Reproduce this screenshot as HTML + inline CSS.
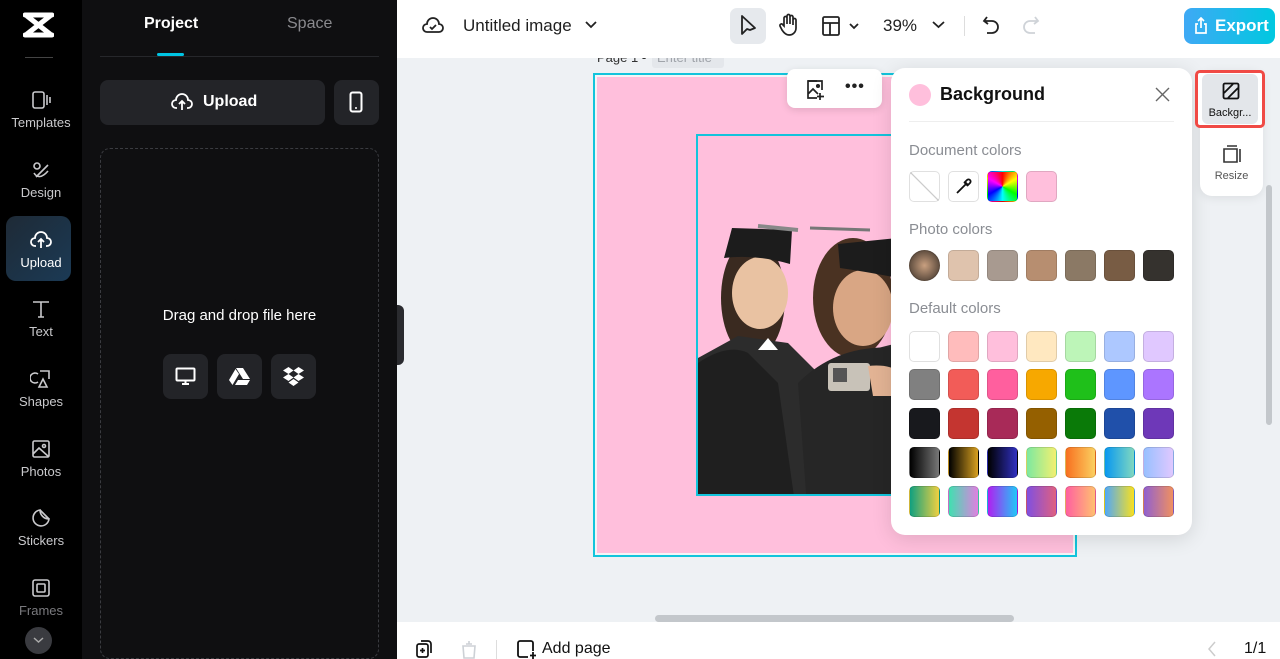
<!DOCTYPE html>
<html><head><meta charset="utf-8"><style>
*{box-sizing:border-box;margin:0;padding:0}
body{width:1280px;height:659px;overflow:hidden;font-family:"Liberation Sans",sans-serif;background:#eef1f4;position:relative}
.abs{position:absolute}
.rail{left:0;top:0;width:82px;height:659px;background:#000}
.ri{position:absolute;left:0;width:82px;text-align:center;color:#c9c9cc;font-size:13px}
.ri svg{display:block;margin:0 auto 4px}
.panel{left:82px;top:0;width:315px;height:659px;background:#0f0f11}
.top{left:397px;top:0;width:883px;height:58px;background:#fff;z-index:2}
.bot{left:397px;top:622px;width:883px;height:37px;background:#fff}
.sw{position:absolute;width:31px;height:31px;border-radius:5px;border:1px solid rgba(0,0,0,.12)}
.lbl{position:absolute;left:909px;color:#8a8d93;font-size:15px}
.z{z-index:3}
</style></head><body>
<div class="abs rail"></div>
<svg class="abs" style="left:23px;top:12px" width="31" height="26" viewBox="0 0 31 26"><path d="M2 3h27M2 23h27M4 4l23 18M27 4L4 22" stroke="#fff" stroke-width="5" fill="none" stroke-linecap="round"/></svg>
<div class="abs" style="left:25px;top:57px;width:28px;height:1px;background:#444"></div>
<div class="ri" style="top:89px"><svg width="22" height="22" viewBox="0 0 22 22" fill="none" stroke="#c9c9cc" stroke-width="1.6"><rect x="3" y="3" width="11" height="16" rx="2"/><path d="M17 6v10M20 8v6"/></svg>Templates</div>
<div class="ri" style="top:159px"><svg width="22" height="22" viewBox="0 0 22 22" fill="none" stroke="#c9c9cc" stroke-width="1.6"><circle cx="7" cy="7" r="3"/><path d="M6 18l12-12M4 14c3 5 8 5 14-2"/></svg>Design</div>
<div class="abs" style="left:6px;top:216px;width:65px;height:65px;border-radius:10px;background:linear-gradient(135deg,#1e2a36,#1b3a55)"></div>
<div class="ri" style="top:229px;color:#fff"><svg width="22" height="22" viewBox="0 0 22 22" fill="none" stroke="#fff" stroke-width="1.8"><path d="M6 17H5a4 4 0 0 1 0-8 6 6 0 0 1 12 0 4 4 0 0 1 0 8h-1M11 19v-8M8 13l3-3 3 3"/></svg>Upload</div>
<div class="ri" style="top:298px"><svg width="22" height="22" viewBox="0 0 22 22" fill="none" stroke="#c9c9cc" stroke-width="1.6"><path d="M3 4h16M11 4v15M8 19h6"/></svg>Text</div>
<div class="ri" style="top:368px"><svg width="22" height="22" viewBox="0 0 22 22" fill="none" stroke="#c9c9cc" stroke-width="1.6"><path d="M8 6a5 5 0 1 0 0 8M10 3h9v8M9 19l4-8 4 8z"/></svg>Shapes</div>
<div class="ri" style="top:438px"><svg width="22" height="22" viewBox="0 0 22 22" fill="none" stroke="#c9c9cc" stroke-width="1.6"><rect x="3" y="3" width="16" height="16" rx="1.5"/><circle cx="14" cy="8" r="1.5"/><path d="M3 16l6-6 10 9"/></svg>Photos</div>
<div class="ri" style="top:507px"><svg width="22" height="22" viewBox="0 0 22 22" fill="none" stroke="#c9c9cc" stroke-width="1.6"><path d="M19 12A8 8 0 1 1 10 3c0 5 4 9 9 9zM10 3l9 9"/></svg>Stickers</div>
<div class="ri" style="top:577px;color:#7a7a7e"><svg width="22" height="22" viewBox="0 0 22 22" fill="none" stroke="#c9c9cc" stroke-width="1.6"><rect x="3" y="3" width="16" height="16" rx="2"/><rect x="7" y="7" width="8" height="8" rx="1"/></svg>Frames</div>
<div class="abs" style="left:25px;top:627px;width:27px;height:27px;border-radius:50%;background:#3a3b40"></div>
<svg class="abs" style="left:33px;top:636px" width="11" height="8"><path d="M1 2l4.5 4 4.5-4" stroke="#aaa" fill="none" stroke-width="1.5"/></svg>

<div class="abs panel"></div>
<div class="abs" style="left:144px;top:15px;color:#fff;font-weight:bold;font-size:16px">Project</div>
<div class="abs" style="left:287px;top:15px;color:#8a8a8e;font-size:16px">Space</div>
<div class="abs" style="left:100px;top:56px;width:279px;height:1px;background:#26272b"></div>
<div class="abs" style="left:157px;top:53px;width:27px;height:3px;border-radius:2px;background:#00c4e3"></div>
<div class="abs" style="left:100px;top:80px;width:225px;height:45px;border-radius:8px;background:#232428"></div>
<svg class="abs" style="left:171px;top:92px" width="22" height="20" viewBox="0 0 22 20" fill="none" stroke="#fff" stroke-width="1.8"><path d="M6 16H5a4 4 0 0 1 0-8 6 6 0 0 1 12 0 4 4 0 0 1 0 8h-1M11 18v-8M8 12l3-3 3 3"/></svg>
<div class="abs" style="left:203px;top:93px;color:#fff;font-weight:bold;font-size:16px">Upload</div>
<div class="abs" style="left:334px;top:80px;width:45px;height:45px;border-radius:8px;background:#232428"></div>
<svg class="abs" style="left:349px;top:91px" width="14" height="22"><rect x="1.5" y="1.5" width="11" height="19" rx="2" stroke="#fff" stroke-width="2" fill="none"/><circle cx="7" cy="17" r="1" fill="#fff"/></svg>
<div class="abs" style="left:100px;top:148px;width:279px;height:511px;border:1px dashed #3a3b40;border-radius:10px"></div>
<div class="abs" style="left:100px;top:307px;width:279px;text-align:center;color:#fff;font-size:15px">Drag and drop file here</div>
<div class="abs" style="left:163px;top:354px;width:45px;height:45px;border-radius:8px;background:#232428"></div>
<div class="abs" style="left:217px;top:354px;width:45px;height:45px;border-radius:8px;background:#232428"></div>
<div class="abs" style="left:271px;top:354px;width:45px;height:45px;border-radius:8px;background:#232428"></div>
<svg class="abs" style="left:175px;top:367px" width="21" height="19"><rect x="1.5" y="1.5" width="18" height="12" rx="1" stroke="#fff" stroke-width="2" fill="none"/><path d="M7 17h7M10.5 14v3" stroke="#fff" stroke-width="2"/></svg>
<svg class="abs" style="left:229px;top:367px" width="21" height="18" viewBox="0 0 21 18"><path d="M7 1h7l7 11h-7z" fill="#fff"/><path d="M6.5 2L0 13l3.5 5 6.5-11z" fill="#fff"/><path d="M6 18l3-5h12l-3 5z" fill="#fff"/></svg>
<svg class="abs" style="left:283px;top:366px" width="21" height="20" viewBox="0 0 21 20" fill="#fff"><path d="M5.5 1L0 4.5 5.5 8 10.5 4.5zM15.5 1L10.5 4.5 15.5 8 21 4.5zM0 11.5L5.5 15 10.5 11.5 5.5 8zM21 11.5L15.5 8 10.5 11.5 15.5 15zM5.5 16.5L10.5 20 15.5 16.5 10.5 13z"/></svg>
<div class="abs" style="left:397px;top:305px;width:7px;height:60px;background:#2a2b2f;border-radius:0 6px 6px 0"></div>

<div class="abs top"></div>
<svg class="abs z" style="left:422px;top:15px" width="22" height="20" viewBox="0 0 22 20" fill="none" stroke="#222" stroke-width="1.8"><path d="M6 17H5a4 4 0 0 1 0-8 6 6 0 0 1 12 0 4 4 0 0 1 0 8H6M8 12l2 2 4-4"/></svg>
<div class="abs z" style="left:463px;top:16px;font-size:17px;color:#1f1f1f">Untitled image</div>
<svg class="abs z" style="left:585px;top:21px" width="12" height="8"><path d="M1 1l5 5 5-5" stroke="#222" stroke-width="1.8" fill="none"/></svg>
<div class="abs z" style="left:730px;top:8px;width:36px;height:36px;border-radius:7px;background:#e6e9ed"></div>
<svg class="abs z" style="left:739px;top:14px" width="18" height="24"><path d="M3 2v18l5-5 3 1 5 -2z" stroke="#222" stroke-width="1.8" fill="none" stroke-linejoin="round"/></svg>
<svg class="abs z" style="left:778px;top:13px" width="20" height="24" viewBox="0 0 20 24" fill="none" stroke="#222" stroke-width="1.7"><path d="M6 13V5a1.5 1.5 0 0 1 3 0v6V3a1.5 1.5 0 0 1 3 0v8V4a1.5 1.5 0 0 1 3 0v8V7a1.5 1.5 0 0 1 3 0v8c0 4-3 7-7 7-3 0-5-2-7-5l-2-4a1.5 1.5 0 0 1 3-1z"/></svg>
<svg class="abs z" style="left:821px;top:15px" width="40" height="22" fill="none" stroke="#222" stroke-width="1.8"><rect x="2" y="2" width="16" height="18" rx="1.5"/><path d="M2 8h16M9 8v12M29 9l4 4 4-4"/></svg>
<div class="abs z" style="left:883px;top:16px;font-size:17px;color:#1f1f1f">39%</div>
<svg class="abs z" style="left:932px;top:21px" width="13" height="8"><path d="M1 1l5.5 5 5.5-5" stroke="#222" stroke-width="1.8" fill="none"/></svg>
<div class="abs z" style="left:964px;top:16px;width:1px;height:20px;background:#ddd"></div>
<svg class="abs z" style="left:982px;top:15px" width="18" height="22" fill="none" stroke="#222" stroke-width="1.8"><path d="M5 2L2 6l4 3M2 6h8a6 6 0 0 1 0 12H5"/></svg>
<svg class="abs z" style="left:1022px;top:15px" width="18" height="22" fill="none" stroke="#cfd3d8" stroke-width="1.8"><path d="M13 2l3 4-4 3M16 6H8a6 6 0 0 0 0 12h5"/></svg>
<div class="abs z" style="left:1184px;top:8px;width:91px;height:36px;border-radius:8px;background:linear-gradient(90deg,#3fa9f5,#00c8e0)"></div>
<svg class="abs z" style="left:1194px;top:17px" width="14" height="17" fill="none" stroke="#fff" stroke-width="1.7"><path d="M4 7H2v9h10V7h-2M7 11V1M4 4l3-3 3 3"/></svg>
<div class="abs z" style="left:1215px;top:16px;font-size:17px;color:#fff;font-weight:bold">Export</div>

<div class="abs" style="left:597px;top:52px;font-size:13px;color:#333;line-height:12px;">Page 1 -</div>
<div class="abs" style="left:652px;top:50px;width:72px;height:18px;background:#e4e7eb;border-radius:3px"></div>
<div class="abs" style="left:657px;top:52px;font-size:13px;color:#a0a4aa;line-height:12px">Enter title</div>
<div class="abs" style="left:593px;top:73px;width:484px;height:484px;border:2px solid #13c4dc;background:#f4f4f6;padding:2px"><div style="width:100%;height:100%;background:#ffbfdc"></div></div>
<div class="abs" style="left:696px;top:134px;width:200px;height:362px;border:2px solid #13c4dc;background:#ffbfdc;overflow:hidden">
<svg width="200" height="362" viewBox="0 0 200 362"><g transform="translate(0,22)">
<ellipse cx="55" cy="140" rx="32" ry="60" fill="#3a2a20"/>
<ellipse cx="155" cy="140" rx="40" ry="60" fill="#4a3222"/>
<path d="M0 200L40 178 90 185 120 215 160 195 200 185V362H0z" fill="#2c2c2c"/>
<path d="M0 205q30-20 50-10l30 30 20 142H0z" fill="#1f1f1f"/>
<path d="M100 225q40-40 100-35V362H110z" fill="#262626"/>
<ellipse cx="62" cy="135" rx="28" ry="36" fill="#e9c2a2"/>
<ellipse cx="165" cy="150" rx="30" ry="38" fill="#d9a684"/>
<path d="M70 180l-10 12 20 0z" fill="#fff"/>
<path d="M26 100l8-30 60 2 -2 34q-35-10-66-6z" fill="#1c1c1c"/>
<path d="M60 68l40 4" stroke="#888" stroke-width="4"/>
<path d="M140 86l60-6v40q-30-6-58-10z" fill="#1c1c1c"/>
<path d="M112 70l60 2" stroke="#777" stroke-width="3"/>
<rect x="130" y="205" width="42" height="28" rx="3" fill="#c8c2b8"/>
<rect x="135" y="210" width="14" height="14" fill="#555"/>
<path d="M170 208q20-2 30 5v25h-25z" fill="#e2b394"/>
</g></svg></div>
<div class="abs" style="left:787px;top:69px;width:95px;height:39px;background:#fff;border-radius:8px;box-shadow:0 2px 8px rgba(0,0,0,.12)"></div>
<svg class="abs" style="left:805px;top:79px" width="22" height="22" fill="none" stroke="#222" stroke-width="1.7"><path d="M12 2H3v17h9M3 15l5-5 5 5M15 14v7M12 17.5h7"/><path d="M3 2h14v9"/><circle cx="13" cy="7" r="1.2" fill="#222"/></svg>
<div class="abs" style="left:845px;top:78px;font-size:16px;font-weight:bold;color:#222;letter-spacing:1px">•••</div>

<div class="abs" style="left:891px;top:68px;width:301px;height:467px;border-radius:14px;background:#fff;box-shadow:0 4px 20px rgba(0,0,0,.12)"></div>
<div class="abs" style="left:909px;top:84px;width:22px;height:22px;border-radius:50%;background:#ffbfdc"></div>
<div class="abs" style="left:940px;top:84px;font-size:18px;font-weight:bold;color:#111">Background</div>
<svg class="abs" style="left:1155px;top:87px" width="15" height="15"><path d="M1 1l13 13M14 1L1 14" stroke="#666" stroke-width="1.4"/></svg>
<div class="abs" style="left:909px;top:121px;width:265px;height:1px;background:#eee"></div>
<div class="lbl" style="top:142px">Document colors</div>
<div class="sw" style="left:909px;top:171px;background:linear-gradient(45deg,#fff 48%,#ccc 49%,#ccc 51%,#fff 52%)"></div>
<div class="sw" style="left:948px;top:171px;background:#fff"></div>
<svg class="abs" style="left:954px;top:177px" width="19" height="19" fill="none" stroke="#111" stroke-width="1.8"><path d="M3 16l9-9M10 5l4 4M13 3a2 2 0 0 1 3 3l-2 2-3-3z" /></svg>
<div class="sw" style="left:987px;top:171px;background:conic-gradient(red,#ff0,#0f0,#0ff,#00f,#f0f,red)"></div>
<div class="sw" style="left:1026px;top:171px;background:#ffbfdc"></div>
<div class="lbl" style="top:221px">Photo colors</div>
<div class="sw" style="left:909px;top:250px;border-radius:50%;background:radial-gradient(#c9a080,#3a3028)"></div>
<div class="sw" style="left:948px;top:250px;background:#dfc3ad"></div>
<div class="sw" style="left:987px;top:250px;background:#a89a90"></div>
<div class="sw" style="left:1026px;top:250px;background:#b78e70"></div>
<div class="sw" style="left:1065px;top:250px;background:#8b7965"></div>
<div class="sw" style="left:1104px;top:250px;background:#785c44"></div>
<div class="sw" style="left:1143px;top:250px;background:#35322e"></div>
<div class="lbl" style="top:300px">Default colors</div>
<div class="sw" style="left:909px;top:331px;background:#fff"></div>
<div class="sw" style="left:948px;top:331px;background:#ffbcbc"></div>
<div class="sw" style="left:987px;top:331px;background:#ffbfdc"></div>
<div class="sw" style="left:1026px;top:331px;background:#ffe8c0"></div>
<div class="sw" style="left:1065px;top:331px;background:#bdf5b8"></div>
<div class="sw" style="left:1104px;top:331px;background:#adc8ff"></div>
<div class="sw" style="left:1143px;top:331px;background:#e0c8ff"></div>
<div class="sw" style="left:909px;top:369px;background:#808080"></div>
<div class="sw" style="left:948px;top:369px;background:#f25c58"></div>
<div class="sw" style="left:987px;top:369px;background:#ff5f9e"></div>
<div class="sw" style="left:1026px;top:369px;background:#f7a800"></div>
<div class="sw" style="left:1065px;top:369px;background:#1fc01a"></div>
<div class="sw" style="left:1104px;top:369px;background:#5e96ff"></div>
<div class="sw" style="left:1143px;top:369px;background:#ab75ff"></div>
<div class="sw" style="left:909px;top:408px;background:#18191d"></div>
<div class="sw" style="left:948px;top:408px;background:#c43530"></div>
<div class="sw" style="left:987px;top:408px;background:#a82a58"></div>
<div class="sw" style="left:1026px;top:408px;background:#956000"></div>
<div class="sw" style="left:1065px;top:408px;background:#0a7a08"></div>
<div class="sw" style="left:1104px;top:408px;background:#2050aa"></div>
<div class="sw" style="left:1143px;top:408px;background:#6e38b8"></div>
<div class="sw" style="left:909px;top:447px;background:linear-gradient(90deg,#000,#777)"></div>
<div class="sw" style="left:948px;top:447px;background:linear-gradient(90deg,#000,#d8a020)"></div>
<div class="sw" style="left:987px;top:447px;background:linear-gradient(90deg,#000,#3030c0)"></div>
<div class="sw" style="left:1026px;top:447px;background:linear-gradient(90deg,#7de8a0,#f2f070)"></div>
<div class="sw" style="left:1065px;top:447px;background:linear-gradient(90deg,#f87020,#fbd060)"></div>
<div class="sw" style="left:1104px;top:447px;background:linear-gradient(90deg,#0898f0,#80d8c0)"></div>
<div class="sw" style="left:1143px;top:447px;background:linear-gradient(90deg,#98c0ff,#e0c8ff)"></div>
<div class="sw" style="left:909px;top:486px;background:linear-gradient(90deg,#10a080,#f0d040)"></div>
<div class="sw" style="left:948px;top:486px;background:linear-gradient(90deg,#40e0b0,#e080e0)"></div>
<div class="sw" style="left:987px;top:486px;background:linear-gradient(90deg,#b020f0,#20c8f8)"></div>
<div class="sw" style="left:1026px;top:486px;background:linear-gradient(90deg,#8050e0,#e06080)"></div>
<div class="sw" style="left:1065px;top:486px;background:linear-gradient(90deg,#ff60a0,#ffc070)"></div>
<div class="sw" style="left:1104px;top:486px;background:linear-gradient(90deg,#50a8f8,#f8e020)"></div>
<div class="sw" style="left:1143px;top:486px;background:linear-gradient(90deg,#9060d0,#f09060)"></div>

<div class="abs" style="left:1200px;top:70px;width:63px;height:126px;border-radius:12px;background:#fff;box-shadow:0 2px 10px rgba(0,0,0,.08)"></div>
<div class="abs" style="left:1195px;top:70px;width:70px;height:58px;border:3px solid #f04a45;border-radius:5px;background:#fff"></div>
<div class="abs" style="left:1202px;top:74px;width:56px;height:50px;border-radius:6px;background:#e3e6ea"></div>
<svg class="abs" style="left:1222px;top:82px" width="18" height="18" fill="none" stroke="#111" stroke-width="1.8"><rect x="1.5" y="1.5" width="15" height="15" rx="1.5"/><path d="M2 11L11 2M6 16l10-10"/></svg>
<div class="abs" style="left:1202px;top:107px;width:56px;text-align:center;font-size:11px;color:#111">Backgr...</div>
<svg class="abs" style="left:1222px;top:145px" width="19" height="19" fill="none" stroke="#333" stroke-width="1.6"><path d="M2 4h13v13H2zM5 1h10M18 4v13"/></svg>
<div class="abs" style="left:1200px;top:170px;width:63px;text-align:center;font-size:11px;color:#555">Resize</div>
<div class="abs" style="left:1266px;top:185px;width:6px;height:240px;border-radius:3px;background:#c3c7cb"></div>
<div class="abs" style="left:655px;top:615px;width:359px;height:7px;border-radius:4px;background:#c3c7cb"></div>

<div class="abs bot"></div>
<svg class="abs" style="left:415px;top:639px" width="18" height="20" fill="none" stroke="#111" stroke-width="1.7"><rect x="2" y="5" width="11" height="13" rx="2"/><path d="M6 2h7a3 3 0 0 1 3 3v9M7.5 9v5M5 11.5h5"/></svg>
<svg class="abs" style="left:460px;top:640px" width="18" height="19" fill="none" stroke="#cdd1d6" stroke-width="1.6"><path d="M3 6h12l-1 12H4zM6 4h6M9 1v3"/></svg>
<div class="abs" style="left:496px;top:640px;width:1px;height:19px;background:#ddd"></div>
<svg class="abs" style="left:516px;top:639px" width="22" height="20" fill="none" stroke="#111" stroke-width="1.8"><path d="M12 18H4a2 2 0 0 1-2-2V4a2 2 0 0 1 2-2h11a2 2 0 0 1 2 2v8M17 13v7M14 16.5h6"/></svg>
<div class="abs" style="left:542px;top:640px;font-size:16px;color:#111">Add page</div>
<svg class="abs" style="left:1207px;top:641px" width="10" height="16"><path d="M8 1L2 8l6 7" stroke="#ccc" stroke-width="1.5" fill="none"/></svg>
<div class="abs" style="left:1244px;top:640px;font-size:16px;color:#111">1/1</div>
</body></html>
